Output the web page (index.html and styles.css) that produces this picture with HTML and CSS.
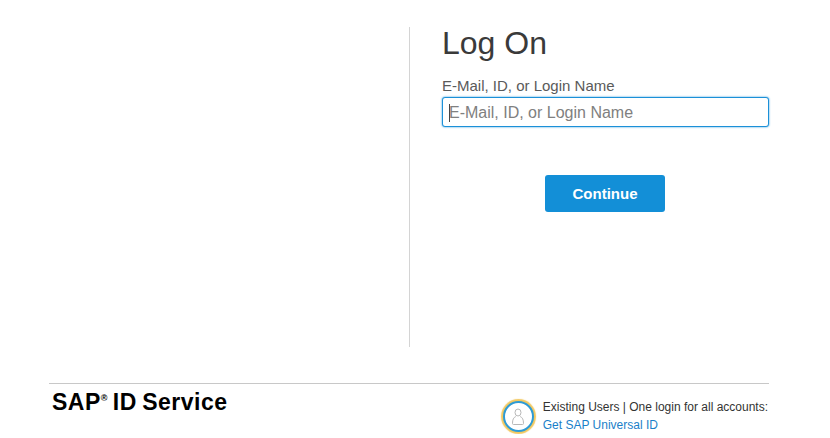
FILE: index.html
```html
<!DOCTYPE html>
<html lang="en">
  <head>
    <meta charset="UTF-8">
    <title>Log On</title>
    <link rel="stylesheet" href="styles.css">
  </head>
  <body>
    <div class="main">
      <div class="side"></div>
      <form class="logon">
        <h1 class="title">Log On</h1>
        <label class="field-label" for="email">E-Mail, ID, or Login Name</label>
        <div class="field">
          <input id="email" class="field-input" type="text" placeholder="E-Mail, ID, or Login Name">
          <span class="caret"></span>
        </div>
        <div class="actions">
          <button class="btn-continue" type="button">Continue</button>
        </div>
      </form>
    </div>
    <div class="footer">
      <div class="brand">SAP<sup class="reg">®</sup> ID Service</div>
      <div class="promo">
        <div class="badge">
          <svg class="badge-icon" width="14" height="18" viewBox="0 0 14 18" fill="none" stroke="#b8b8b8" stroke-width="1">
            <ellipse cx="7" cy="4.500" rx="3" ry="3.500"/>
            <path d="M4.800 8.500C2.500 9.500 1.500 11.500 1.500 15.500a1 1 0 0 0 1 1h9a1 1 0 0 0 1-1c0-4-1-6-3.300-7"/>
          </svg>
        </div>
        <div class="promo-text">
          <div>Existing Users | One login for all accounts:</div>
          <a class="promo-link" href="#">Get SAP Universal ID</a>
        </div>
      </div>
    </div>
  </body>
</html>
```

FILE: styles.css
```css
body {
	margin: 0;
	font-family: "Liberation Sans", Arial, sans-serif;
	background: #fff;
	overflow: hidden;
}
.main {
	display: flex;
	padding-top: 27px;
	height: 320px;
}
.side {
	width: 409px;
	border-right: 1px solid #d4d4d4;
}
.logon {
	width: 327px;
	margin-left: 32px;
}
.title {
	margin: 0;
	font-size: 32px;
	line-height: 32px;
	font-weight: 400;
	color: #3a3a3a;
}
.field-label {
	display: block;
	margin-top: 18px;
	font-size: 15px;
	line-height: 17px;
	color: #5a5a5a;
}
.field {
	position: relative;
	margin-top: 3px;
}
.field-input {
	display: block;
	width: 100%;
	height: 30px;
	box-sizing: border-box;
	padding: 2px 6px 0;
	border: 1px solid #1b90d8;
	border-radius: 3px;
	box-shadow: 0 0 2px #1b90d8;
	outline: none;
	font-family: inherit;
	font-size: 16px;
	color: #333;
}
.field-input::placeholder {
	color: #808080;
	opacity: 1;
}
.caret {
	position: absolute;
	left: 7px;
	top: 7px;
	width: 1px;
	height: 18px;
	background: #444;
}
.actions {
	display: flex;
	margin-top: 48px;
}
.btn-continue {
	width: 120px;
	height: 37px;
	margin-left: 103px;
	border: 0;
	border-radius: 3px;
	background: #138fd7;
	color: #fff;
	font-family: inherit;
	font-size: 15px;
	font-weight: 700;
}
.footer {
	display: flex;
	justify-content: space-between;
	width: 720px;
	margin: 36px 0 0 49px;
	border-top: 1px solid #c8c8c8;
}
.brand {
	margin: 5px 0 0 3px;
	font-size: 23px;
	line-height: 26px;
	font-weight: 700;
	letter-spacing: 0.5px;
	word-spacing: -1.5px;
	color: #000;
}
.reg {
	font-size: 9px;
	line-height: 0;
	vertical-align: 9px;
	font-weight: 700;
	letter-spacing: 0;
}
.promo {
	display: flex;
	gap: 8px;
	margin: 14px 1px 0 0;
}
.badge {
	display: flex;
	align-items: center;
	justify-content: center;
	width: 27px;
	height: 27px;
	margin: 3px 1px 0 0;
	border: 2px solid #2e9bd6;
	border-radius: 50%;
	background: #fff;
	box-shadow: 0 0 1px 2px #f2c85f;
}
.promo-text {
	font-size: 12px;
	line-height: 18px;
	color: #333;
}
.promo-link {
	color: #1a7fc9;
	text-decoration: none;
}
```
